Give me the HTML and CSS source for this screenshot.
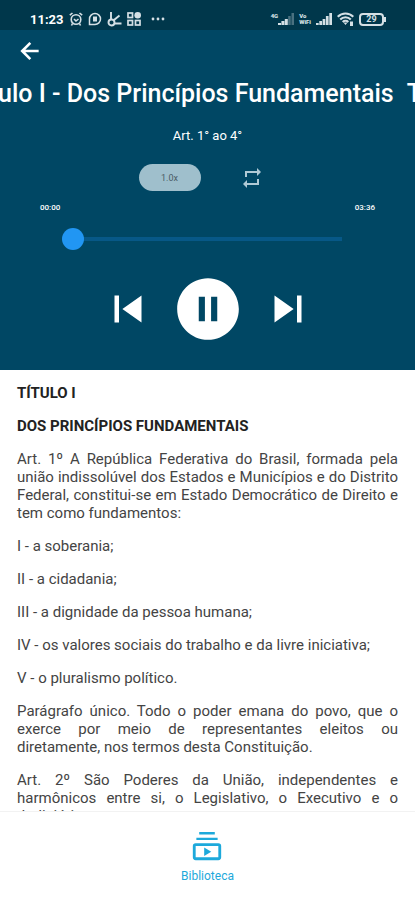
FILE: index.html
```html
<!DOCTYPE html>
<html lang="pt-BR">
<head>
  <meta charset="UTF-8">
  <meta name="viewport" content="width=device-width, initial-scale=1.0">
  <title>Título I - Dos Princípios Fundamentais</title>
  <link rel="stylesheet" href="styles.css">
</head>
<body>
  <div class="status-bar">
    <div class="status-left">
      <span class="clock">11:23</span>
      <svg width="14" height="14" viewBox="0 0 14 14" fill="none" stroke="currentColor" stroke-width="1.600">
        <circle cx="7" cy="7.500" r="4.800"/><path d="M.8 3.200l2.700-2.200M13.200 3.200L10.500 1M5 7l2 2 2.500-2M3.500 11.500l-1 2M10.500 11.500l1 2"/>
      </svg>
      <svg width="14" height="14" viewBox="0 0 14 14" fill="none" stroke="currentColor" stroke-width="1.500">
        <path d="M1.500 12.500V7A5.500 5.500 0 1 1 7 12.500z"/><path d="M5 4.500h4v5H5z" fill="currentColor" stroke="none"/>
      </svg>
      <svg width="15" height="15" viewBox="0 0 15 15" fill="none" stroke="currentColor" stroke-width="1.900">
        <circle cx="4.500" cy="10.500" r="3"/><path d="M4 0v7M7 8l5.500-4.500M8 11.500h6.500"/>
      </svg>
      <svg width="14" height="14" viewBox="0 0 14 14" fill="none" stroke="currentColor" stroke-width="1.700">
        <rect x="1" y="1" width="4.500" height="4.500"/><rect x="1" y="8.500" width="4.500" height="4.500"/><rect x="8.500" y="8.500" width="4.500" height="4.500"/><circle cx="10.700" cy="3.300" r="3.300" fill="currentColor" stroke="none"/>
      </svg>
      <svg class="dots" width="16" height="14" viewBox="0 0 16 14" fill="currentColor">
        <circle cx="3" cy="7" r="1.400"/><circle cx="8" cy="7" r="1.400"/><circle cx="13" cy="7" r="1.400"/>
      </svg>
    </div>
    <div class="status-right">
      <div class="signal">
        <span class="net">4G</span>
        <svg width="16" height="12" viewBox="0 0 16 12" fill="currentColor">
          <path d="M0 10h3v2H0zM3.400 8h3v4h-3zM6.800 6h3v6h-3z"/><path d="M10.200 3h2.500v9h-2.500zM13.500 0H16v12h-2.500z" opacity=".35"/>
        </svg>
      </div>
      <div class="vowifi"><span>Vo</span><span>WiFi</span></div>
      <svg width="16" height="12" viewBox="0 0 16 12" fill="currentColor">
        <path d="M0 10h2.700v2H0zM3.300 8H6v4H3.300zM6.600 6h2.700v6H6.600zM9.900 3h2.700v9H9.900zM13.300 0H16v12h-2.700z"/>
      </svg>
      <svg class="wifi" width="17" height="14" viewBox="0 0 17 14" fill="none" stroke="currentColor" stroke-width="2.100">
        <path d="M.7 4.700a11 11 0 0 1 15.600 0M3.200 7.500a7.500 7.500 0 0 1 10.600 0M5.700 10a4 4 0 0 1 5.600 0"/><path d="M8.500 13l-2-2.500h4zM13 9.500h3V14h-3z" fill="currentColor" stroke="none"/>
      </svg>
      <div class="battery"><span class="level">29</span><span class="tip"></span></div>
    </div>
  </div>

  <header class="player">
    <a href="#" class="back" aria-label="Voltar">
      <svg width="26" height="26" viewBox="0 0 24 24" fill="none" stroke="currentColor" stroke-width="2.400">
        <path d="M20 12H5M12.300 4.500L4.800 12l7.500 7.500"/>
      </svg>
    </a>

    <div class="marquee">
      <h1>Título I - Dos Princípios Fundamentais</h1>
      <span aria-hidden="true">Título I - Dos Princípios Fundamentais</span>
    </div>
    <p class="subtitle">Art. 1° ao 4°</p>

    <div class="options">
      <button type="button" class="speed">1.0x</button>
      <button type="button" class="icon-btn repeat" aria-label="Repetir">
        <svg width="24" height="24" viewBox="0 0 24 24" fill="currentColor">
          <path d="M7 7h10v3l4-4-4-4v3H5v6h2V7zm10 10H7v-3l-4 4 4 4v-3h12v-6h-2v4z"/>
        </svg>
      </button>
    </div>

    <div class="times">
      <span>00:00</span>
      <span>03:36</span>
    </div>
    <input type="range" class="seek" min="0" max="216" value="0" aria-label="Posição do áudio">

    <div class="controls">
      <button type="button" class="icon-btn" aria-label="Anterior">
        <svg width="54" height="54" viewBox="0 0 24 24" fill="currentColor"><path d="M6 6h2v12H6zm3.500 6l8.500 6V6z"/></svg>
      </button>
      <button type="button" class="icon-btn" aria-label="Pausar">
        <svg width="74" height="74" viewBox="0 0 24 24" fill="currentColor"><path d="M12 2C6.480 2 2 6.480 2 12s4.480 10 10 10 10-4.480 10-10S17.520 2 12 2zm-1 14H9V8h2v8zm4 0h-2V8h2v8z"/></svg>
      </button>
      <button type="button" class="icon-btn" aria-label="Próximo">
        <svg width="54" height="54" viewBox="0 0 24 24" fill="currentColor"><path d="M6 18l8.500-6L6 6v12zM16 6v12h2V6h-2z"/></svg>
      </button>
    </div>
  </header>

  <main class="text">
    <h2>TÍTULO I</h2>
    <h2>DOS PRINCÍPIOS FUNDAMENTAIS</h2>
    <p>Art. 1º A República Federativa do Brasil, formada pela união indissolúvel dos Estados e Municípios e do Distrito Federal, constitui-se em Estado Democrático de Direito e tem como fundamentos:</p>
    <p>I - a soberania;</p>
    <p>II - a cidadania;</p>
    <p>III - a dignidade da pessoa humana;</p>
    <p>IV - os valores sociais do trabalho e da livre iniciativa;</p>
    <p>V - o pluralismo político.</p>
    <p>Parágrafo único. Todo o poder emana do povo, que o exerce por meio de representantes eleitos ou diretamente, nos termos desta Constituição.</p>
    <p>Art. 2º São Poderes da União, independentes e harmônicos entre si, o Legislativo, o Executivo e o Judiciário.</p>
  </main>

  <nav class="bottom-nav">
    <a href="#">
      <svg width="34" height="34" viewBox="0 0 24 24" fill="none" stroke="currentColor" stroke-width="2">
        <path d="M6.500 3h11M4.500 7h15" stroke-width="1.700"/><rect x="3" y="11" width="18" height="10" rx="1"/><path d="M10 13l5 3-5 3z" fill="currentColor" stroke="none"/>
      </svg>
      <span>Biblioteca</span>
    </a>
  </nav>
</body>
</html>
```
FILE: styles.css
```css
* {
  box-sizing: border-box;
}

body {
  margin: 0;
  height: 100vh;
  display: flex;
  flex-direction: column;
  font-family: Roboto, Arial, sans-serif;
  background-color: #fff;
  color: #444;
}

h1, h2, p {
  margin: 0;
}

svg {
  display: block;
}

/* Barra de status */
.status-bar {
  flex: none;
  height: 30px;
  padding: 8px 29px 0 30px;
  display: flex;
  justify-content: space-between;
  align-items: center;
  background-color: #00374b;
  color: #d5e0e5;
}

.status-left,
.status-right {
  display: flex;
  align-items: center;
  gap: 5px;
}

.clock {
  font-size: 13px;
  font-weight: 700;
  color: #fff;
}

.dots {
  margin-left: 4px;
}

.signal {
  display: flex;
  align-items: center;
}

.net,
.vowifi {
  font-size: 6px;
  line-height: 6px;
  font-weight: 900;
}

.net {
  align-self: flex-start;
}

.vowifi {
  display: flex;
  flex-direction: column;
}

.battery {
  display: flex;
  align-items: center;
}

.level {
  width: 25px;
  height: 13px;
  border: 2px solid;
  border-radius: 4px;
  font-size: 9px;
  line-height: 9px;
  font-weight: 700;
  text-align: center;
}

.tip {
  width: 2px;
  height: 5px;
  background-color: #d5e0e5;
}

/* Player */
.player {
  flex: none;
  display: flex;
  flex-direction: column;
  padding-bottom: 24px;
  background-color: #004764;
  color: #fff;
}

.back {
  align-self: flex-start;
  margin: 8px 0 0 17px;
  color: #fff;
}

.marquee {
  display: flex;
  gap: 13px;
  margin-top: 14px;
  overflow: hidden;
  white-space: nowrap;
  font-size: 25px;
  line-height: 32px;
  font-weight: 500;
}

.marquee h1 {
  margin-left: -32px;
  font-size: inherit;
  font-weight: inherit;
}

.subtitle {
  margin-top: 17px;
  font-size: 13px;
  line-height: 18px;
  font-weight: 400;
  text-align: center;
}

.options {
  display: flex;
  justify-content: center;
  align-items: center;
  gap: 39px;
  margin-top: 19px;
  padding-right: 13px;
}

.speed {
  width: 62px;
  height: 27px;
  padding: 0;
  border: none;
  border-radius: 14px;
  background-color: #9fbfcc;
  color: #4a5c66;
  font-family: inherit;
  font-size: 9px;
}

.icon-btn {
  padding: 0;
  border: none;
  background: none;
  color: inherit;
}

.repeat {
  color: #b0cad5;
}

.times {
  display: flex;
  justify-content: space-between;
  margin-top: 11px;
  padding: 0 40px;
  font-size: 8px;
  line-height: 12px;
  font-weight: 500;
}

.seek {
  appearance: none;
  height: 22px;
  margin: 14px 62px 0;
  background: none;
}

.seek::-webkit-slider-runnable-track {
  height: 22px;
  background: linear-gradient(#075887, #075887) no-repeat center / calc(100% - 22px) 4px;
}

.seek::-webkit-slider-thumb {
  appearance: none;
  width: 22px;
  height: 22px;
  border-radius: 50%;
  background-color: #2196f3;
}

.controls {
  display: flex;
  justify-content: center;
  align-items: center;
  gap: 16px;
  margin-top: 22px;
}

/* Texto da lei */
.text {
  flex: 1;
  min-height: 0;
  overflow-y: auto;
  scrollbar-width: none;
  display: flex;
  flex-direction: column;
  gap: 15px;
  padding: 14px 17px 0;
  font-size: 15px;
  line-height: 18px;
  text-align: justify;
}

.text h2 {
  font-size: 15px;
  font-weight: 700;
  color: #222;
}

/* Navegação */
.bottom-nav {
  flex: none;
  display: flex;
  justify-content: center;
  padding: 17px 0 16px;
  border-top: 1px solid #f2f2f2;
}

.bottom-nav a {
  display: flex;
  flex-direction: column;
  align-items: center;
  gap: 5px;
  color: #1da9db;
  font-size: 12px;
  line-height: 16px;
  text-decoration: none;
}
```
